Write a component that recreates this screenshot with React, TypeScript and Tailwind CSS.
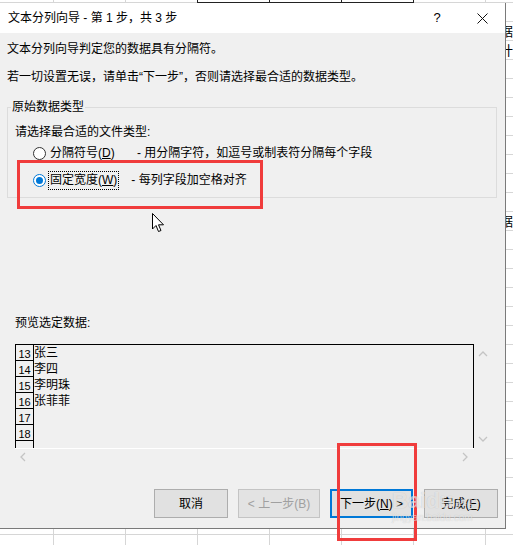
import React from "react";

const rows = [
  { n: "13", text: "张三" },
  { n: "14", text: "李四" },
  { n: "15", text: "李明珠" },
  { n: "16", text: "张菲菲" },
  { n: "17", text: "" },
  { n: "18", text: "" },
  { n: "", text: "" },
];

const Chevron = ({ dir }: { dir: "up" | "down" | "left" | "right" }) => {
  const d = {
    up: "M1 6 L5 2 L9 6",
    down: "M1 2 L5 6 L9 2",
    left: "M6 1 L2 5 L6 9",
    right: "M2 1 L6 5 L2 9",
  }[dir];
  const horiz = dir === "left" || dir === "right";
  return (
    <svg width={horiz ? 8 : 10} height={horiz ? 10 : 8} viewBox={horiz ? "0 0 8 10" : "0 0 10 8"}>
      <path d={d} fill="none" stroke="#c4c4c4" strokeWidth="1.3" />
    </svg>
  );
};

const Radio = ({ checked }: { checked?: boolean }) =>
  checked ? (
    <span className="w-[13px] h-[13px] rounded-full border border-[#0078d7] bg-white flex items-center justify-center shrink-0">
      <span className="w-[7px] h-[7px] rounded-full bg-[#0078d7]" />
    </span>
  ) : (
    <span className="block w-[13px] h-[13px] rounded-full border border-[#333] bg-white shrink-0" />
  );

export default function App() {
  return (
    <div className="relative w-[513px] h-[545px] overflow-hidden bg-white text-black [font-family:'Liberation_Sans','Noto_Sans_CJK_SC',sans-serif] [background-image:linear-gradient(to_right,#d6d6d6_1px,transparent_1px),linear-gradient(to_bottom,#d6d6d6_1px,transparent_1px)] [background-size:72px_19px] [background-position:53px_2px]">
      {/* sheet cells peeking above the dialog */}
      <div className="h-[3px] flex">
        <div className="ml-[197px] flex h-[3px] border-b border-l border-[#222]">
          <div className="w-[72px] border-r border-[#222]" />
          <div className="w-[72px] border-r border-[#222]" />
          <div className="w-[72px] border-r border-[#222]" />
        </div>
      </div>

      <div className="flex">
        {/* dialog */}
        <div className="w-[506px] h-[526px] flex flex-col bg-[#f0f0f0] border-r border-b border-[#7a7a7a]">
          <div className="h-[30px] bg-white flex items-center pl-[8px] text-[12px]">
            <span>文本分列向导 - 第 1 步，共 3 步</span>
            <div className="ml-auto flex items-center gap-[25px] pr-[13px]">
              <span className="w-[20px] text-center text-[13px]">?</span>
              <span className="w-[20px] flex justify-center">
                <svg width="11" height="11" viewBox="0 0 11 11">
                  <path d="M0.5 0.5 L10.5 10.5 M10.5 0.5 L0.5 10.5" stroke="#111" strokeWidth="1" />
                </svg>
              </span>
            </div>
          </div>

          <div className="flex-1 px-[7px] pt-[8px] text-[12px]">
            <p className="leading-[16px] h-[16px]">文本分列向导判定您的数据具有分隔符。</p>
            <p className="mt-[12px] leading-[16px] h-[16px]">
              若一切设置无误，请单击“下一步”，否则请选择最合适的数据类型。
            </p>

            <div className="relative mt-[22px] w-[490px] h-[91px] border border-[#dcdcdc]">
              <span className="absolute left-[3px] -top-[9px] px-[1px] bg-[#f0f0f0] leading-[16px]">原始数据类型</span>
              <div className="pt-[16px] pl-[7px]">
                <p className="leading-[16px] h-[16px]">请选择最合适的文件类型:</p>
                <div className="mt-[5px] h-[16px] flex items-center">
                  <span className="ml-[18px]">
                    <Radio />
                  </span>
                  <span className="ml-[4px] w-[87px] leading-[16px]">
                    分隔符号(<span className="underline">D</span>)
                  </span>
                  <span className="leading-[16px]">- 用分隔字符，如逗号或制表符分隔每个字段</span>
                </div>
                <div className="mt-[9px] h-[20px] flex items-center">
                  <span className="ml-[18px]">
                    <Radio checked />
                  </span>
                  <span className="ml-[2px] px-[1px] border border-dotted border-black leading-[17px]">
                    固定宽度(<span className="underline">W</span>)
                  </span>
                  <span className="ml-[12px] leading-[16px]">- 每列字段加空格对齐</span>
                </div>
              </div>
            </div>

            <p className="mt-[117px] pl-[8px] leading-[16px] h-[16px]">预览选定数据:</p>

            <div className="mt-[13px] pl-[8px] flex">
              <div className="w-[459px]">
                <div className="h-[104px] border-x border-t border-black overflow-hidden flex">
                  <div className="w-[18px] border-r border-black">
                    {rows.map((r, i) => (
                      <div
                        key={i}
                        className="h-[16px] border-b border-black flex items-end justify-center text-[11px] leading-[11px]"
                      >
                        {r.n}
                      </div>
                    ))}
                  </div>
                  <div>
                    {rows.map((r, i) => (
                      <div key={i} className="h-[16px] leading-[16px] text-[12px]">
                        {r.text}
                      </div>
                    ))}
                  </div>
                </div>
                <div className="h-[17px] border-t border-white flex items-center justify-between pl-[4px] pr-[5px]">
                  <Chevron dir="left" />
                  <Chevron dir="right" />
                </div>
              </div>
              <div className="w-[17px] h-[104px] flex flex-col items-center justify-between pt-[6px] pb-[5px]">
                <Chevron dir="up" />
                <Chevron dir="down" />
              </div>
            </div>

            <div className="mt-[24px] ml-[147px] flex h-[29px] text-[12px]">
              <button className="w-[74px] h-[29px] bg-[#e1e1e1] border border-[#adadad]">取消</button>
              <button className="ml-[10px] w-[82px] h-[29px] bg-[#e3e3e3] border border-[#c4c4c4] text-[#a0a0a0]">
                &lt; 上一步(B)
              </button>
              <button className="ml-[10px] w-[83px] h-[29px] bg-[#e1e1e1] border-2 border-[#0078d7]">
                下一步(<span className="underline">N</span>) &gt;
              </button>
              <button className="ml-[11px] w-[74px] h-[29px] bg-[#e1e1e1] border border-[#adadad]">
                完成(<span className="underline">F</span>)
              </button>
            </div>
          </div>
        </div>

        {/* sheet strip to the right of the dialog */}
        <div className="w-[7px] overflow-hidden text-[13px] leading-[19px] [font-family:'Noto_Sans_CJK_SC',sans-serif]">
          <div className="-ml-[6px] w-[20px]">
            <div className="h-[18px]" />
            <div className="h-[19px]">据</div>
            <div className="h-[19px]">计</div>
            <div className="h-[152px]" />
            <div className="h-[19px]">据</div>
          </div>
        </div>
      </div>

      {/* annotations over the screenshot */}
      <div className="absolute left-[17px] top-[160px] w-[246px] h-[49px] border-[3px] border-[#f03c3c]" />
      <div className="absolute left-[337px] top-[443px] w-[80px] h-[98px] border-[3px] border-[#f03c3c]" />

      <svg className="absolute left-[152px] top-[213px]" width="13" height="20" viewBox="0 0 13 20">
        <path d="M0.5 0.5 L0.5 16 L4 12.5 L6.5 18.5 L9 17.5 L6.5 11.8 L11.5 11.8 Z" fill="#fff" stroke="#000" strokeWidth="1" />
      </svg>

      {/* watermark */}
      <div className="absolute left-[392px] top-[490px] flex flex-col items-start text-white/60 [text-shadow:0_0_1px_rgba(0,0,0,0.2)] pointer-events-none">
        <div className="flex items-end leading-[22px]">
          <span className="text-[22px] font-bold">Bai</span>
          <span className="text-[22px] font-bold">du</span>
          <span className="ml-[2px] text-[12px] leading-[16px] [font-family:'Noto_Sans_CJK_SC',sans-serif]">经验</span>
        </div>
        <span className="text-[10px] leading-[12px]">jingyan.baidu.com</span>
      </div>
    </div>
  );
}
